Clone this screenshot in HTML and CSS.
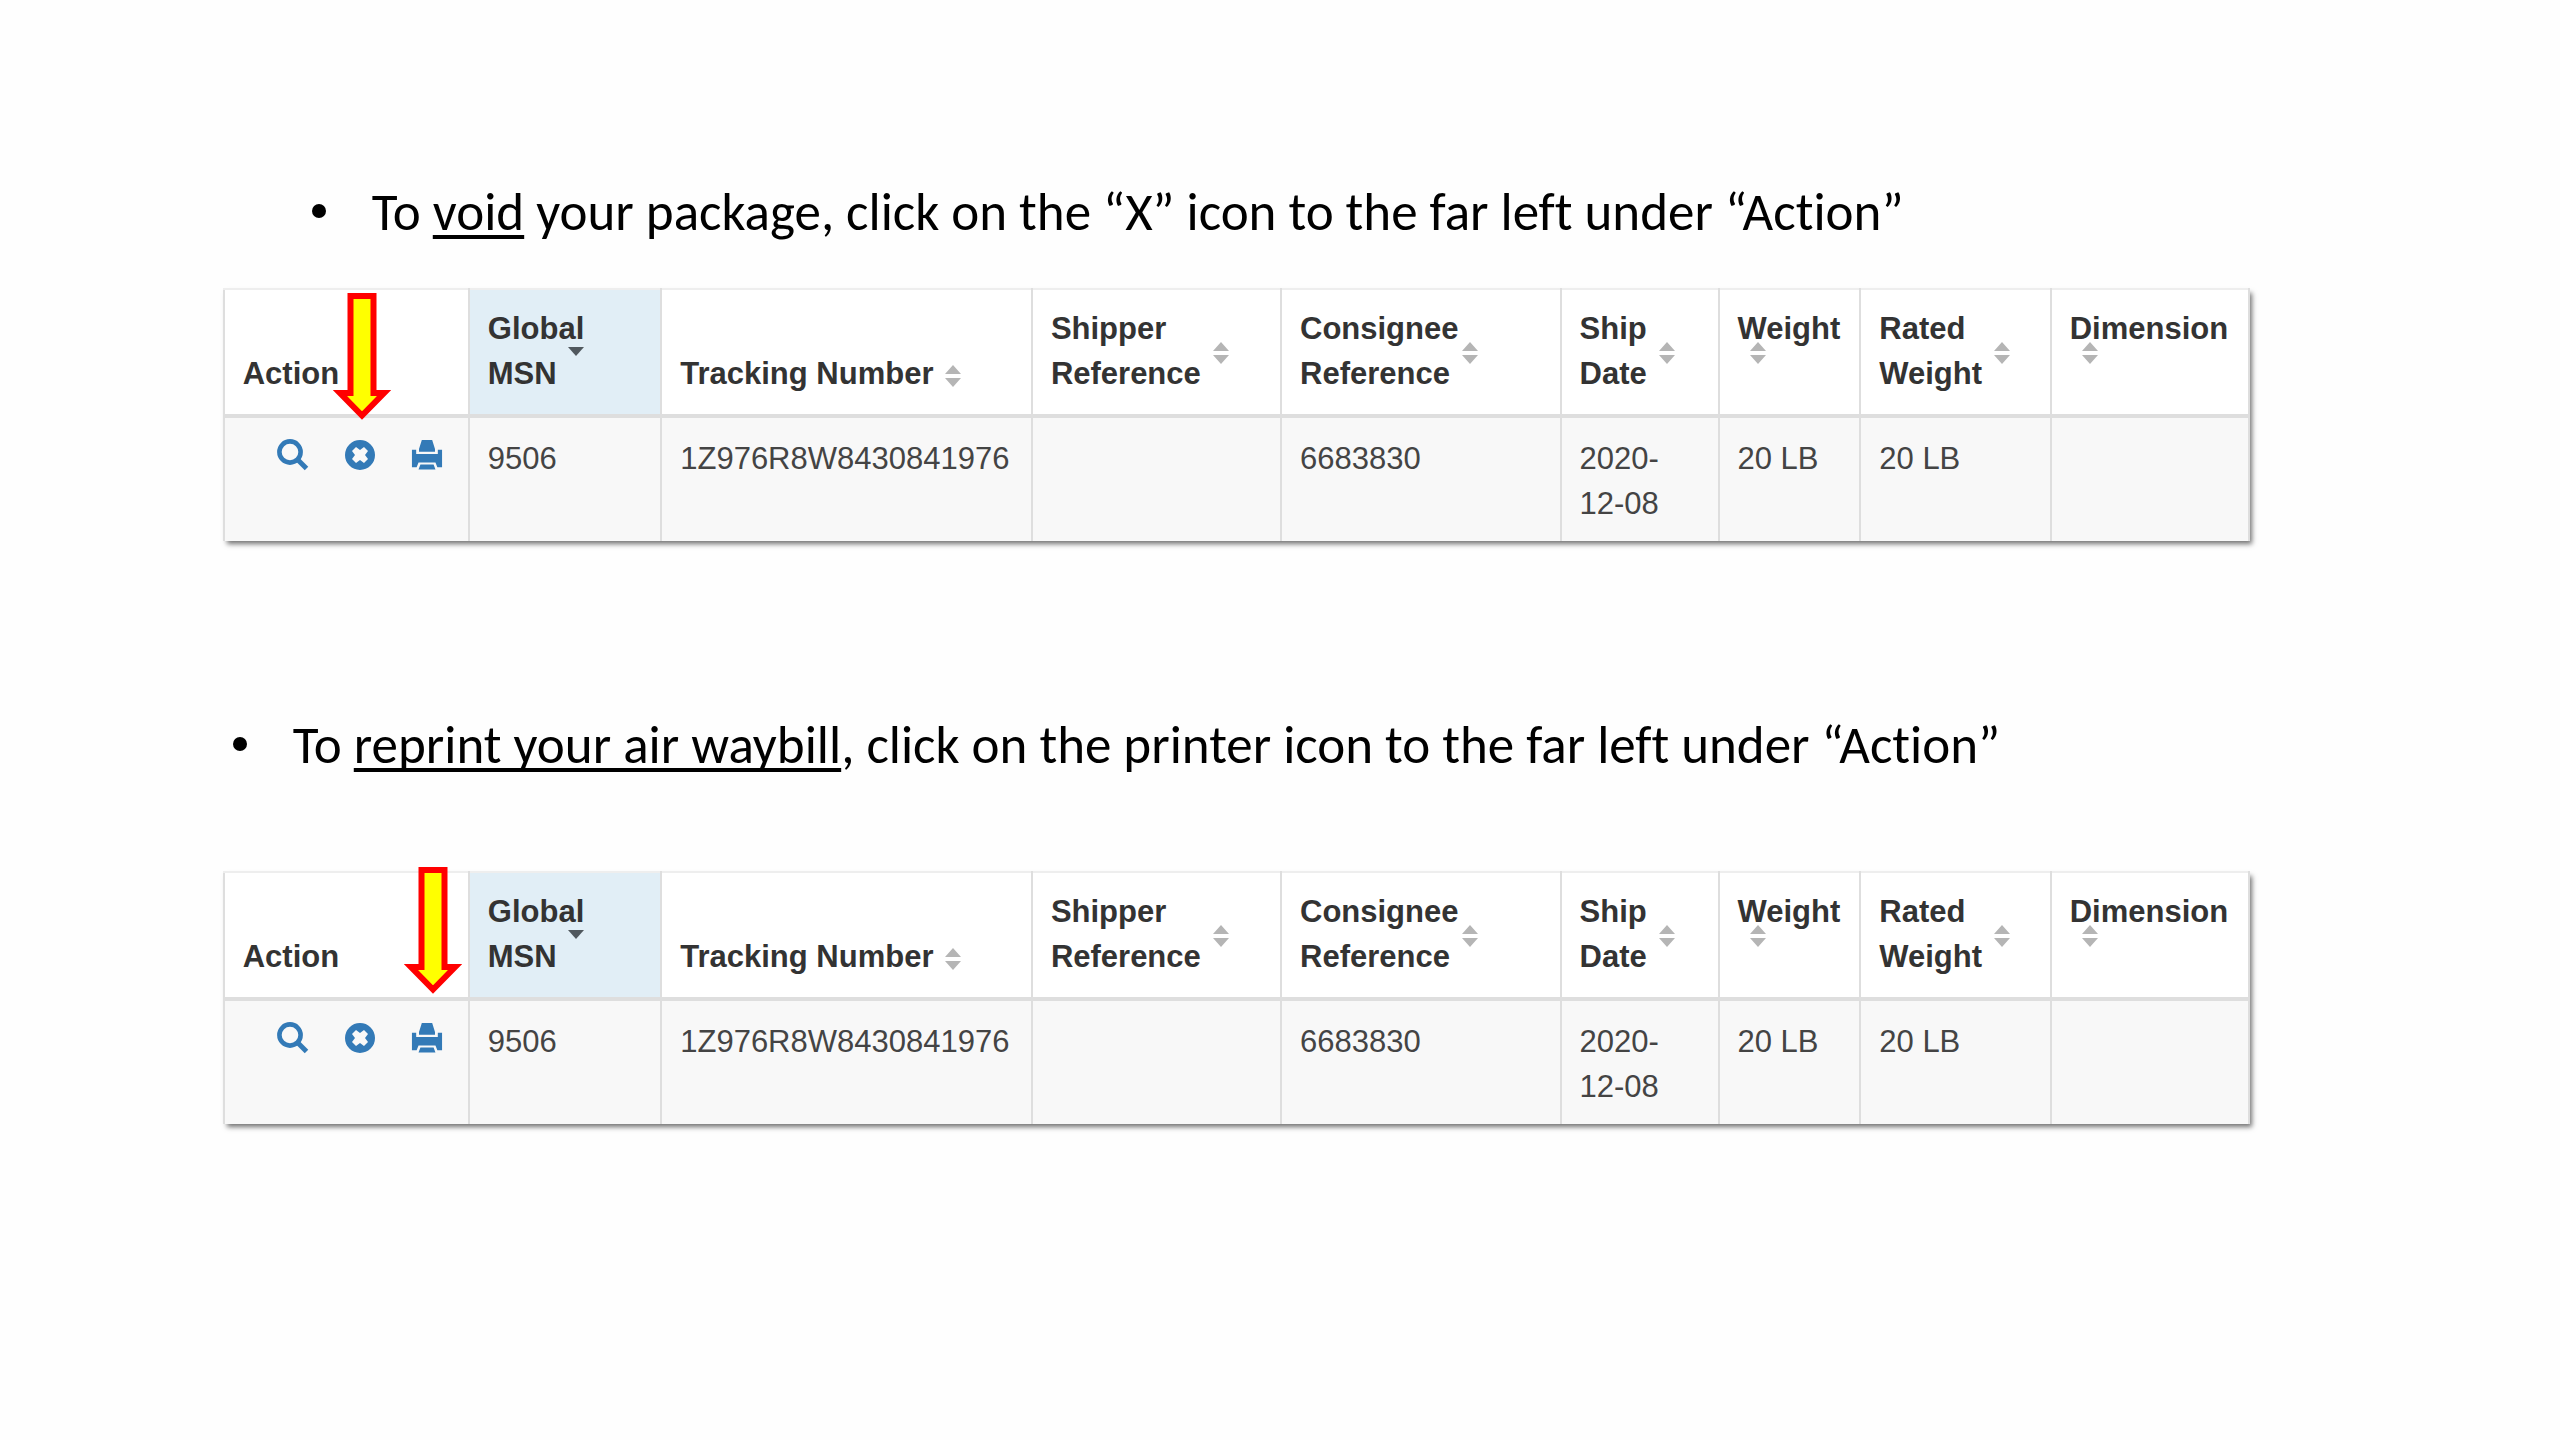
FILE: index.html
```html
<!DOCTYPE html>
<html lang="en">
<head>
    <meta charset="UTF-8">
    <meta name="viewport" content="width=device-width, initial-scale=1.0">
    <title>Void or reprint a shipment</title>
    <link rel="stylesheet" href="styles.css">
</head>
<body>
    <!-- shared icons -->
    <svg class="sprite" aria-hidden="true">
        <symbol id="i-search" viewBox="0 0 32 32">
            <circle cx="13" cy="13" r="10.6" fill="none" stroke="currentColor" stroke-width="4.6"/>
            <path d="M20.5 20.5 L29.5 29.5" fill="none" stroke="currentColor" stroke-width="5"/>
        </symbol>
        <symbol id="i-void" viewBox="0 0 32 32">
            <path fill="currentColor" fill-rule="evenodd" d="M16 1a15 15 0 1 0 0 30a15 15 0 1 0 0-30zM12 8l4 3 4-3 4 4-3 4 3 4-4 4-4-3-4 3-4-4 3-4-3-4z"/>
        </symbol>
        <symbol id="i-print" viewBox="0 0 34 32">
            <path fill="currentColor" d="M11.500 0h11l3 9.500v3h-17v-3zM1 10.500h4.500v4.500h23v-4.500H33V29h-5l-2-5H8l-2 5H1zM10 26h14l2 5.500H8z"/>
        </symbol>
        <symbol id="i-sort" viewBox="0 0 16 22">
            <path fill="#b5b5b5" d="M8 0l8 9H0zM0 13h16l-8 9z"/>
        </symbol>
        <symbol id="i-desc" viewBox="0 0 16 9">
            <path fill="#50585e" d="M0 0h16l-8 9z"/>
        </symbol>
        <symbol id="i-arrow" viewBox="0 0 58 127">
            <path fill="#ff0" stroke="#f00" stroke-width="6" d="M17.500 3h23v97H51L29 122.500 7 100h10.500z"/>
        </symbol>
    </svg>

    <main class="page">
        <ul class="step step-void">
            <li>To <u>void</u> your package, click on the “X” icon to the far left under “Action”</li>
        </ul>
        <div class="shot">
            <table class="grid">
                <colgroup>
                    <col class="c-action"><col class="c-msn"><col class="c-track"><col class="c-shipper"><col class="c-consignee"><col class="c-date"><col class="c-weight"><col class="c-rated"><col class="c-dim">
                </colgroup>
                <thead>
                    <tr>
                        <th>Action</th>
                        <th class="sorted"><button class="sort">Global<br>MSN<svg class="desc"><use href="#i-desc"/></svg></button></th>
                        <th><button class="sort">Tracking Number<svg class="both"><use href="#i-sort"/></svg></button></th>
                        <th><button class="sort">Shipper<br>Reference<svg class="both"><use href="#i-sort"/></svg></button></th>
                        <th><button class="sort tight">Consignee<br>Reference<svg class="both"><use href="#i-sort"/></svg></button></th>
                        <th><button class="sort">Ship<br>Date<svg class="both"><use href="#i-sort"/></svg></button></th>
                        <th><button class="sort stacked">Weight<svg class="both"><use href="#i-sort"/></svg></button></th>
                        <th><button class="sort">Rated<br>Weight<svg class="both"><use href="#i-sort"/></svg></button></th>
                        <th><button class="sort stacked">Dimension<svg class="both"><use href="#i-sort"/></svg></button></th>
                    </tr>
                </thead>
                <tbody>
                    <tr>
                        <td>
                            <div class="actions">
                                <a href="#" aria-label="View"><svg><use href="#i-search"/></svg></a>
                                <a href="#" aria-label="Void"><svg><use href="#i-void"/></svg></a>
                                <a href="#" aria-label="Print"><svg><use href="#i-print"/></svg></a>
                            </div>
                        </td>
                        <td>9506</td>
                        <td>1Z976R8W8430841976</td>
                        <td></td>
                        <td>6683830</td>
                        <td>2020-<br>12-08</td>
                        <td>20 LB</td>
                        <td>20 LB</td>
                        <td></td>
                    </tr>
                </tbody>
            </table>
            <svg class="arrow arrow-void"><use href="#i-arrow"/></svg>
        </div>

        <ul class="step step-print">
            <li>To <u>reprint your air waybill</u>, click on the printer icon to the far left under “Action”</li>
        </ul>
        <div class="shot">
            <table class="grid">
                <colgroup>
                    <col class="c-action"><col class="c-msn"><col class="c-track"><col class="c-shipper"><col class="c-consignee"><col class="c-date"><col class="c-weight"><col class="c-rated"><col class="c-dim">
                </colgroup>
                <thead>
                    <tr>
                        <th>Action</th>
                        <th class="sorted"><button class="sort">Global<br>MSN<svg class="desc"><use href="#i-desc"/></svg></button></th>
                        <th><button class="sort">Tracking Number<svg class="both"><use href="#i-sort"/></svg></button></th>
                        <th><button class="sort">Shipper<br>Reference<svg class="both"><use href="#i-sort"/></svg></button></th>
                        <th><button class="sort tight">Consignee<br>Reference<svg class="both"><use href="#i-sort"/></svg></button></th>
                        <th><button class="sort">Ship<br>Date<svg class="both"><use href="#i-sort"/></svg></button></th>
                        <th><button class="sort stacked">Weight<svg class="both"><use href="#i-sort"/></svg></button></th>
                        <th><button class="sort">Rated<br>Weight<svg class="both"><use href="#i-sort"/></svg></button></th>
                        <th><button class="sort stacked">Dimension<svg class="both"><use href="#i-sort"/></svg></button></th>
                    </tr>
                </thead>
                <tbody>
                    <tr>
                        <td>
                            <div class="actions">
                                <a href="#" aria-label="View"><svg><use href="#i-search"/></svg></a>
                                <a href="#" aria-label="Void"><svg><use href="#i-void"/></svg></a>
                                <a href="#" aria-label="Print"><svg><use href="#i-print"/></svg></a>
                            </div>
                        </td>
                        <td>9506</td>
                        <td>1Z976R8W8430841976</td>
                        <td></td>
                        <td>6683830</td>
                        <td>2020-<br>12-08</td>
                        <td>20 LB</td>
                        <td>20 LB</td>
                        <td></td>
                    </tr>
                </tbody>
            </table>
            <svg class="arrow arrow-print"><use href="#i-arrow"/></svg>
        </div>
    </main>
</body>
</html>
```
FILE: styles.css
```css
:root {
    --line: #dedede;
    --link: #337ab7;
    --text: #333;
}

* {
    box-sizing: border-box;
}

body {
    margin: 0;
    background: #fefefe;
    color: #000;
}

.sprite {
    display: none;
}

.page {
    width: 79.2%;
    margin-left: 8.7%;
    padding: 182px 0 80px;
}

/* instructions */
.step {
    list-style: none;
    margin: 0;
    padding: 0;
    font: 53px/60px Carlito, Calibri, Lato, sans-serif;
    font-variant-ligatures: none;
    white-space: nowrap;
}

.step li {
    display: block;
    position: relative;
    padding-left: 60px;
}

.step li::before {
    content: "";
    position: absolute;
    left: 0;
    top: 22px;
    width: 14px;
    height: 14px;
    border-radius: 50%;
    background: #000;
}

.step u {
    text-decoration-thickness: 4px;
    text-underline-offset: 5px;
    text-decoration-skip-ink: none;
}

.step-void {
    margin: 0 0 46px 89px;
}

.step-print {
    margin: 174px 0 96px 10px;
}

/* shipment table */
.shot {
    position: relative;
    box-shadow: 3px 4px 5px -1px rgba(0, 0, 0, 0.55);
}

.grid {
    width: 100%;
    table-layout: fixed;
    border-collapse: collapse;
    background: #fff;
    color: var(--text);
    font: 31px/45px "Liberation Sans", Arial, sans-serif;
    white-space: nowrap;
}

.c-action { width: 12.1%; }
.c-msn { width: 9.5%; }
.c-track { width: 18.3%; }
.c-shipper { width: 12.3%; }
.c-consignee { width: 13.8%; }
.c-date { width: 7.8%; }
.c-weight { width: 7%; }
.c-rated { width: 9.4%; }
.c-dim { width: 9.8%; }

.grid th,
.grid td {
    padding: 16px 0 18px 18px;
    border: 2px solid var(--line);
    text-align: left;
}

.grid th {
    vertical-align: bottom;
    border-top-color: #eee;
    border-bottom: 4px solid var(--line);
}

.grid td {
    vertical-align: top;
    padding: 18px 0 15px 18px;
    background: #f8f8f8;
    color: #444;
    border-bottom: 0;
}

.grid .sorted {
    background: #e1eef6;
}

.sort {
    display: inline-block;
    position: relative;
    padding: 0;
    border: 0;
    background: none;
    color: inherit;
    font: inherit;
    text-align: left;
    vertical-align: bottom;
    cursor: pointer;
}

.both {
    position: absolute;
    left: calc(100% + 12px);
    top: calc(50% - 9px);
    width: 16px;
    height: 22px;
}

.tight .both {
    left: calc(100% + 4px);
}

.stacked {
    padding-bottom: 45px;
}

.stacked .both {
    left: 12px;
}

.desc {
    position: absolute;
    right: 0;
    top: 41px;
    width: 16px;
    height: 9px;
}

.actions {
    display: flex;
    gap: 35px;
    padding: 3px 0 0 34px;
}

.actions a {
    display: block;
    height: 32px;
    color: var(--link);
}

.actions svg {
    display: block;
    width: 32px;
    height: 32px;
}

/* pointer arrows */
.arrow {
    position: absolute;
    width: 58px;
    height: 127px;
}

.arrow-void {
    left: 110px;
    top: 5px;
}

.arrow-print {
    left: 181px;
    top: -4px;
}
```
